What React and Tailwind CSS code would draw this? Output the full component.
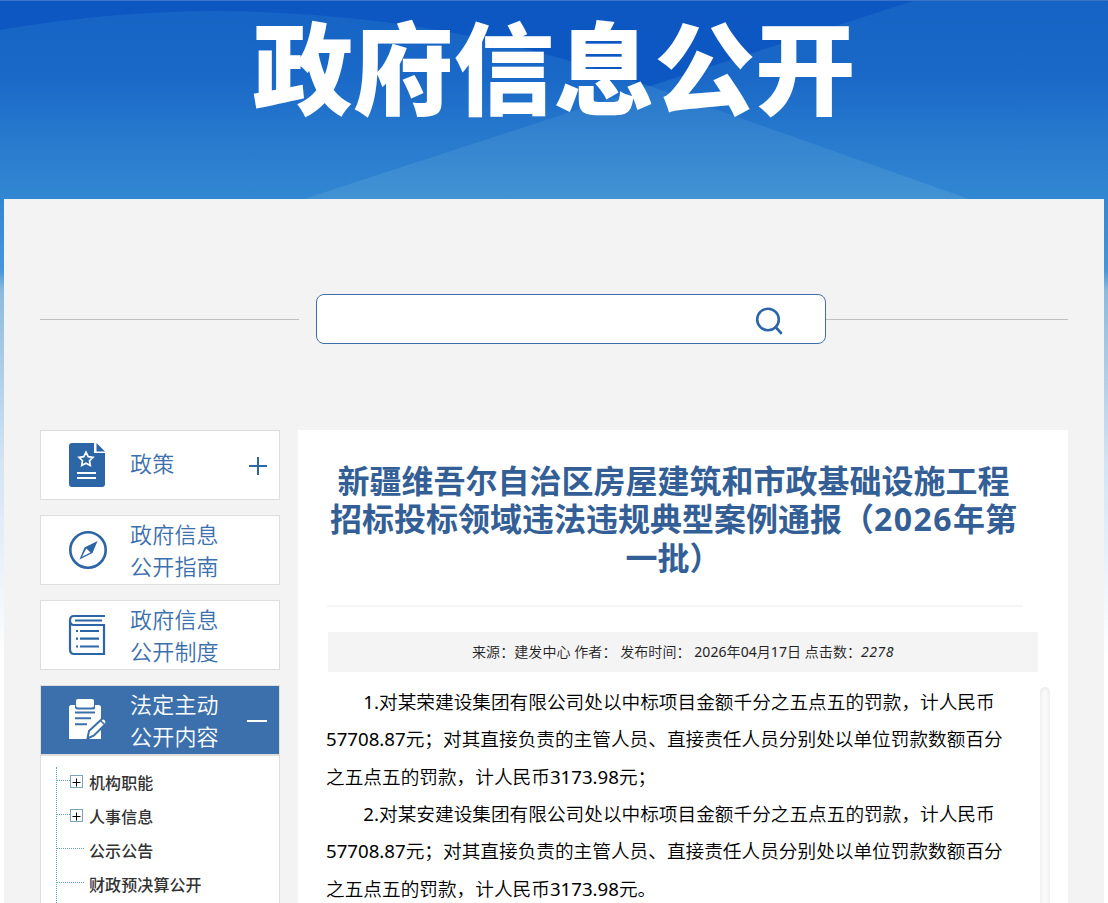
import React from 'react';

const TREE = [
  { label: '机构职能', expandable: true },
  { label: '人事信息', expandable: true },
  { label: '公示公告' },
  { label: '财政预决算公开' },
];

const PARAGRAPHS = [
  ['1.对某荣建设集团有限公司处以中标项目金额千分之五点五的罚款，计人民币', '57708.87元；对其直接负责的主管人员、直接责任人员分别处以单位罚款数额百分', '之五点五的罚款，计人民币3173.98元；'],
  ['2.对某安建设集团有限公司处以中标项目金额千分之五点五的罚款，计人民币', '57708.87元；对其直接负责的主管人员、直接责任人员分别处以单位罚款数额百分', '之五点五的罚款，计人民币3173.98元。'],
];

function Backdrop() {
  return (
    <svg className="absolute inset-0" width="1108" height="903" viewBox="0 0 1108 903">
      <defs>
        <linearGradient id="sky" gradientUnits="userSpaceOnUse" x1="0" y1="0" x2="0" y2="660">
          <stop offset="0" stopColor="#1563c4" />
          <stop offset="0.12" stopColor="#1a69c8" />
          <stop offset="0.2" stopColor="#2678cd" />
          <stop offset="0.3" stopColor="#3287d2" />
          <stop offset="0.41" stopColor="#4596da" />
          <stop offset="0.44" stopColor="#8cbadd" />
          <stop offset="0.7" stopColor="#d3e4f3" />
          <stop offset="1" stopColor="#ffffff" />
        </linearGradient>
        <linearGradient id="hill" gradientUnits="userSpaceOnUse" x1="0" y1="86" x2="0" y2="199">
          <stop offset="0" stopColor="#2877cb" />
          <stop offset="1" stopColor="#4293d4" />
        </linearGradient>
      </defs>
      <rect width="1108" height="660" fill="url(#sky)" />
      <path d="M0 0V30Q110 11 218 11Q400 12 560 58L650 86L916 0Z" fill="#0d57c2" />
      <path d="M304 199L650 86L969 199Z" fill="url(#hill)" />
      <rect width="1108" height="1" fill="#3a74c6" />
    </svg>
  );
}

function PolicyIcon() {
  return (
    <svg width="40" height="46" viewBox="0 0 40 46">
      <path d="M4 1H26V11H37V42Q37 45 34 45H4Q1 45 1 42V4Q1 1 4 1Z" fill="#2c66a6" />
      <path d="M28.5 1L37 9.5H28.5Z" fill="#2c66a6" />
      <path d="M18 10.2L20.2 14.6L25 15.3L21.5 18.7L22.3 23.5L18 21.2L13.7 23.5L14.5 18.7L11 15.3L15.8 14.6Z" fill="none" stroke="#fff" strokeWidth="1.7" />
      <path d="M9 31H28M9 36H28" stroke="#fff" strokeWidth="1.8" />
    </svg>
  );
}

function CompassIcon() {
  return (
    <svg width="40" height="46" viewBox="0 0 40 46">
      <circle cx="20" cy="23" r="17.7" fill="none" stroke="#2c66a6" strokeWidth="2.6" />
      <path d="M29.5 14L24.5 26L11.5 32.5L16.5 20.5Z" fill="#2c66a6" />
      <path d="M18.3 21.5L22.5 25.5L14 29.8Z" fill="#fff" />
    </svg>
  );
}

function BookIcon() {
  return (
    <svg width="40" height="46" viewBox="0 0 40 46" fill="none" stroke="#2c66a6" strokeWidth="2.2">
      <path d="M37 4H6Q2 4 2 8.5V37Q2 42 6 42H36V13H6Q2 13 2 8.5" />
      <path d="M7 8.5H34M12 19H31M12 26.7H31M12 34.5H31" />
      <path d="M8 19H10M8 26.7H10M8 34.5H10" />
    </svg>
  );
}

function ClipboardIcon() {
  return (
    <svg width="40" height="46" viewBox="0 0 40 46">
      <path d="M3.5 8H7V11Q8 12.5 10 12.5H25Q27 12.5 27 11V8H30.5Q33 8 33 10.5V42H1V10.5Q1 8 3.5 8Z" fill="#fff" />
      <rect x="8" y="2" width="18" height="8.5" rx="2" fill="#fff" />
      <path d="M7 15.5H27M7 21.2H23M7 27.2H19" stroke="#3c70ac" strokeWidth="2" />
      <path d="M38.5 26L26 38.5L19.5 41.5L21 34L34.5 21.5Q38 21 38.5 26Z" fill="#fff" stroke="#3c70ac" strokeWidth="2" />
      <path d="M32.5 23.5L37 28" stroke="#3c70ac" strokeWidth="1.5" />
    </svg>
  );
}

// digits take the regular weight, the characters around them stay lighter
function Mixed({ text }) {
  return text.split(/([\d.]+)/).map((part, i) => (
    i % 2 ? <span key={i} className="font-normal">{part}</span> : part
  ));
}

function MenuCard({ icon, children, sign, active }) {
  return (
    <div className={active
      ? 'flex h-[70px] items-center border border-[#dedede] bg-[#3c70ac] pl-[27px] text-white'
      : 'flex h-[70px] items-center border border-[#dedede] bg-white pl-[27px] text-[#3c70ac]'}
    >
      {icon}
      <div className={sign === 'plus'
        ? 'ml-[22px] w-[117px] pb-1 text-[22px] leading-8 font-[350] tracking-[0.2px]'
        : 'ml-[22px] w-[117px] text-[22px] leading-8 font-[350] tracking-[0.2px]'}
      >
        {children}
      </div>
      {sign === 'plus' && (
        <svg className="mt-0.5" width="20" height="20" viewBox="0 0 20 20" stroke="#2c66a6" strokeWidth="2">
          <path d="M2 10H20M11 1V19" />
        </svg>
      )}
      {sign === 'minus' && <span className="mt-px h-0.5 w-5 bg-white" />}
    </div>
  );
}

export default function App() {
  return (
    <div className="relative h-[903px] w-[1108px] overflow-hidden bg-white font-['Noto_Sans','Noto_Sans_CJK_SC',sans-serif]">
      <Backdrop />

      <div className="relative">
        <header className="flex h-[199px] justify-center">
          <h1 className="font-['Noto_Sans_CJK_SC',sans-serif] text-[100.5px] leading-[126px] font-black whitespace-nowrap text-white">政府信息公开</h1>
        </header>

        <main className="mx-1 h-[704px] bg-[#f3f3f3] px-9 pt-[95px]">
          {/* Search */}
          <div className="flex h-[50px] items-center">
            <span className="mr-[17px] h-px w-[259px] bg-[#c0c0c0]" />
            <div className="flex h-full w-[510px] items-center justify-end rounded-lg border border-[#3c70ac] bg-white pr-[42px]">
              <svg className="mt-1" width="28" height="28" viewBox="0 0 28 28" fill="none" stroke="#2c66a6" strokeWidth="2.6">
                <circle cx="13" cy="12.5" r="10.8" />
                <path d="M20.5 20L26 26" strokeLinecap="round" />
              </svg>
            </div>
            <span className="h-px flex-1 bg-[#c0c0c0]" />
          </div>

          <div className="mt-[86px] flex gap-[18px]">
            {/* Sidebar */}
            <aside className="w-60">
              <div className="flex flex-col gap-[15px]">
                <MenuCard icon={<PolicyIcon />} sign="plus">政策</MenuCard>
                <MenuCard icon={<CompassIcon />}>政府信息<br />公开指南</MenuCard>
                <MenuCard icon={<BookIcon />}>政府信息<br />公开制度</MenuCard>
                <MenuCard icon={<ClipboardIcon />} sign="minus" active>法定主动<br />公开内容</MenuCard>
              </div>
              <div className="h-[160px] border border-[#dedede] bg-white pt-[11px] pl-[15px]">
                <ul className="border-l border-dotted border-[#5fa3bf]">
                  {TREE.map(item => (
                    <li key={item.label} className="flex h-[34px] items-start">
                      <span className={item.expandable
                        ? 'mt-[13px] w-[13px] border-t border-dotted border-[#5fa3bf]'
                        : 'mt-[13px] w-[27px] border-t border-dotted border-[#5fa3bf]'}
                      />
                      {item.expandable && (
                        <svg className="mt-2" width="13" height="13" viewBox="0 0 13 13" fill="none">
                          <rect x="0.5" y="0.5" width="12" height="12" fill="#fff" stroke="#7aa5b8" />
                          <path d="M2.5 7.5H10.5M6.5 3.5V11.5" stroke="#000" />
                        </svg>
                      )}
                      <span className={item.expandable
                        ? 'ml-1.5 text-base leading-8 font-medium tracking-[0.1px] text-[#333]'
                        : 'ml-[5px] text-base leading-8 font-medium tracking-[0.1px] text-[#333]'}
                      >
                        {item.label}
                      </span>
                    </li>
                  ))}
                </ul>
              </div>
            </aside>

            {/* Article */}
            <article className="h-[473px] w-[770px] bg-white pt-8 pl-7">
              <h2 className="h-[143px] w-[695px] text-center text-[32px] leading-[38.4px] font-bold text-[#345f96]">
                新疆维吾尔自治区房屋建筑和市政基础设施工程<br />
                招标投标领域违法违规典型案例通报（<span className="tracking-[1.4px]">2026</span>年第<br />
                一批）
              </h2>
              <div className="ml-px h-0.5 w-[696px] bg-[#f5f5f5]" />
              <p className="mt-[25px] ml-0.5 h-10 w-[710px] bg-[#f4f4f4] text-center text-sm leading-10 font-[350] tracking-[0.07px] whitespace-pre text-[#222]">
                来源：建发中心 作者： 发布时间： <Mixed text="2026年04月17日" /> 点击数：<i className="font-normal tracking-[0.5px]">2278</i>
              </p>
              <div className="mt-[11px] flex">
                <div className="w-[714px] text-[18.67px] leading-[37.33px] font-[350] whitespace-nowrap text-black">
                  {PARAGRAPHS.map(lines => (
                    <p key={lines[0]} className="indent-[2em]">
                      {lines.map(line => <React.Fragment key={line}><Mixed text={line} /><br /></React.Fragment>)}
                    </p>
                  ))}
                </div>
                <div className="mt-1 h-[230px] w-2.5 rounded-full bg-[#fafafa] shadow-[inset_0_0_5px_rgba(0,0,0,0.1)]" />
              </div>
            </article>
          </div>
        </main>
      </div>
    </div>
  );
}
